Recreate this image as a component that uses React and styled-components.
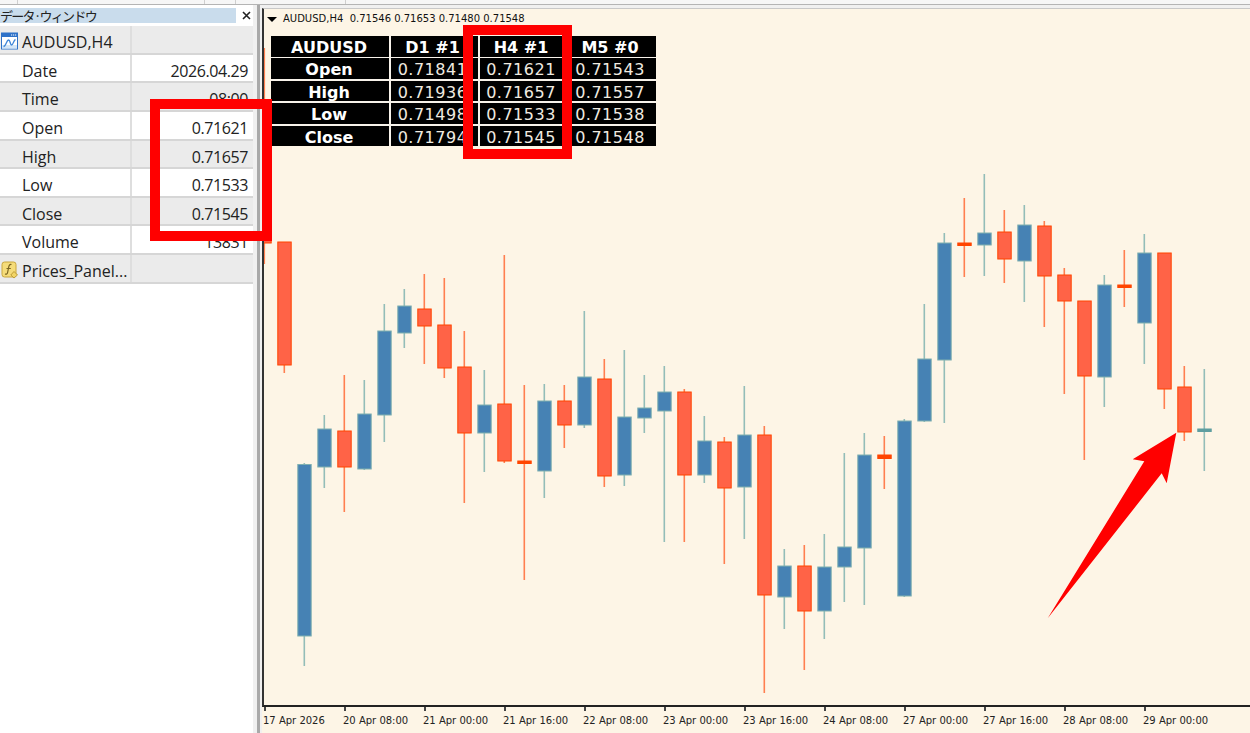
import React from "react"
import styled, { createGlobalStyle } from "styled-components"

const GlobalStyle = createGlobalStyle`
  html, body {
    margin: 0;
    padding: 0;
    height: 100%;
    overflow: hidden;
    background: #ffffff;
  }
  #root {
    height: 100%;
  }
`

const Page = styled.div`
  position: relative;
  display: flex;
  flex-direction: column;
  height: 733px;
  width: 1250px;
  overflow: hidden;
  font-family: "Open Sans", "Noto Sans", sans-serif;
  color: #222;
`
const TopStrip = styled.div`
  display: flex;
  flex: none;
  height: 4px;
  background: #f6f6f6;
  border-bottom: 1px solid #b4b4b4;
`
const StripCell = styled.div`
  flex: none;
  width: ${p => p.$w}px;
  border-right: 1px solid #cfcfcf;
`
const Main = styled.div`
  display: flex;
  flex: 1;
  min-height: 0;
`
const Panel = styled.div`
  flex: none;
  width: 253px;
  padding-top: 3px;
  background: #fff;
`
const PanelEdge = styled.div`
  flex: none;
  width: 4px;
  background: #f0f0f0;
  border-right: 3px solid #a9a9a9;
`
const TitleBar = styled.div`
  display: flex;
  align-items: center;
  height: 15px;
  margin-bottom: 3px;
  width: 258px;
`
const TitleText = styled.div`
  width: 236px;
  height: 15px;
  line-height: 15px;
  background: #c9dcec;
  color: #222;
  font-size: 13px;
  letter-spacing: -1.7px;
  white-space: nowrap;
  font-family: "Noto Sans CJK JP", sans-serif;
`
const CloseIcon = styled.svg`
  width: 9px;
  height: 9px;
  margin-left: 6px;
`
const Row = styled.div`
  display: grid;
  grid-template-columns: 132px 1fr;
  grid-template-rows: 26.65px;
  height: 28.65px;
  box-sizing: border-box;
  background: ${p => (p.$shade ? "#ebebeb" : "#ffffff")};
  border-bottom: 2px solid #d6d6d6;
  font-size: 16px;
  line-height: 32px;
`
const NameCell = styled.div`
  display: flex;
  align-items: flex-start;
  gap: 4px;
  padding-left: ${p => (p.$icon ? 1 : 22)}px;
  border-right: 2px solid #dedede;
  white-space: nowrap;
`
const ValueCell = styled.div`
  text-align: right;
  padding-right: 5px;
  letter-spacing: -0.4px;
`
const Icon = styled.svg`
  flex: none;
  width: 17px;
  height: 18px;
  margin-top: 6px;
`
const ChartWindow = styled.div`
  display: flex;
  flex: 1;
  flex-direction: column;
  min-width: 0;
  padding-left: 2px;
  padding-top: 3px;
  background: #fdf5e6;
  box-shadow: inset 2px 3px 0 #f0f0f0;
`
const Plot = styled.div`
  position: relative;
  flex: none;
  height: 699px;
  box-sizing: border-box;
  border-left: 2px solid #333;
  border-top: 1px solid #c8c8c8;
  border-bottom: 2px solid #222;
  overflow: hidden;
`
const ChartSvg = styled.svg`
  display: block;
  width: 986px;
  height: 696px;
`
const Legend = styled.div`
  position: absolute;
  left: 3px;
  top: 4px;
  display: flex;
  align-items: center;
  font-family: "DejaVu Sans", sans-serif;
  font-size: 10px;
  line-height: 12px;
  color: #111;
  white-space: pre;
`
const LegendArrow = styled.span`
  width: 0;
  height: 0;
  margin-right: 6px;
  border-left: 5px solid transparent;
  border-right: 5px solid transparent;
  border-top: 5px solid #000;
`
const PriceTable = styled.div`
  position: absolute;
  left: 7px;
  top: 27px;
  display: grid;
  grid-template-columns: 118px 87px 82px 92px;
  grid-auto-rows: 20.6px;
  gap: 1.8px 2px;
  background: #f7f2ea;
  font-family: "DejaVu Sans", sans-serif;
  font-size: 16px;
`
const Cell = styled.div`
  background: #000;
  color: ${p => (p.$bold ? "#fff" : "#f0ebe0")};
  font-weight: ${p => (p.$bold ? 700 : 400)};
  letter-spacing: ${p => (p.$bold ? 0 : 0.5)}px;
  text-align: center;
  line-height: ${p => (p.$head ? 23 : 24)}px;
  padding-right: ${p => p.$trim || 0}px;
  white-space: nowrap;
  overflow: hidden;
`
const Axis = styled.div`
  position: relative;
  display: flex;
  padding-left: 1px;
  font-family: "DejaVu Sans", sans-serif;
  font-size: 10px;
  color: #222;
`
const AxisLabel = styled.div`
  flex: none;
  width: 80px;
  box-sizing: border-box;
  height: 24px;
  padding-top: 7px;
  line-height: 13px;
  white-space: nowrap;
  background: linear-gradient(#444, #444) 1px 0 / 2px 4px no-repeat;
`
const Frame = styled.div`
  position: absolute;
  left: ${p => p.$x}px;
  top: ${p => p.$y}px;
  width: ${p => p.$w}px;
  height: ${p => p.$h}px;
  box-sizing: border-box;
  border: 10px solid #ff0000;
`

const rows = [
  ["Date", "2026.04.29"],
  ["Time", "08:00"],
  ["Open", "0.71621"],
  ["High", "0.71657"],
  ["Low", "0.71533"],
  ["Close", "0.71545"],
  ["Volume", "13831"],
]

const table = [
  ["AUDUSD", "D1 #1", "H4 #1", "M5 #0"],
  ["Open", "0.71841", "0.71621", "0.71543"],
  ["High", "0.71936", "0.71657", "0.71557"],
  ["Low", "0.71498", "0.71533", "0.71538"],
  ["Close", "0.71794", "0.71545", "0.71548"],
]

const axisLabels = [
  "17 Apr 2026", "20 Apr 08:00", "21 Apr 00:00", "21 Apr 16:00", "22 Apr 08:00", "23 Apr 00:00",
  "23 Apr 16:00", "24 Apr 08:00", "27 Apr 00:00", "27 Apr 16:00", "28 Apr 08:00", "29 Apr 00:00",
]

// x, high, body top, body bottom, low, up (blue) or down (red)
const candles = [
  [264, 48, 100, 243, 264, 0],
  [284, 242, 242, 365, 373, 0],
  [304, 463, 464.5, 636, 666, 1],
  [324, 415, 429, 467, 488, 1],
  [344, 375, 431, 467, 512, 0],
  [364, 380, 414, 469, 470, 1],
  [384, 304, 331, 415, 442, 1],
  [404, 289, 306, 333, 348, 1],
  [424, 274, 309, 326, 364, 0],
  [444, 278, 325, 368, 378, 0],
  [464, 331, 367, 433, 503, 0],
  [484, 370, 405, 433, 472, 1],
  [504, 255, 404, 461, 463, 0],
  [524, 385, 461, 463.5, 580, 0],
  [544, 384, 401, 471, 498, 1],
  [564, 385, 401, 425, 448, 0],
  [584, 311, 377, 425, 428, 1],
  [604, 359, 379, 476, 487, 0],
  [624, 350, 417, 475, 486, 1],
  [644, 375, 408, 418, 433, 1],
  [664, 366, 392, 411, 542, 1],
  [684, 389, 392, 475, 542, 0],
  [704, 416, 441, 475, 483, 1],
  [724, 437, 442, 488, 564, 0],
  [744, 386, 435, 487, 539, 1],
  [764, 426, 435, 595, 693, 0],
  [784, 549, 566, 597, 629, 1],
  [804, 545, 566, 611, 670, 0],
  [824, 534, 567, 611, 639, 1],
  [844, 453, 547, 567, 602, 1],
  [864, 433, 455, 548, 605, 1],
  [884, 436, 455, 458.5, 489, 0],
  [904, 419, 421, 596, 597, 1],
  [924, 304, 359, 421, 422, 1],
  [944, 233, 243, 360, 423, 1],
  [964, 198, 243, 245.5, 277, 0],
  [984, 174, 233, 245, 276, 1],
  [1004, 210, 232, 259, 283, 0],
  [1024, 205, 225, 261, 302, 1],
  [1044, 221, 226, 276, 327, 0],
  [1064, 268, 275, 301, 394, 0],
  [1084, 301, 301, 376, 460, 0],
  [1104, 275, 285, 377, 407, 1],
  [1124, 250, 285, 287.5, 307, 0],
  [1144, 234, 253, 323, 364, 1],
  [1164, 253, 253, 389, 409, 0],
  [1184, 366, 387, 432, 441, 0],
  [1204, 369, 429, 431.5, 471, 1],
]

const Candle = ({ c }) => {
  const [x, high, top, bottom, low, up] = c
  const wick = up ? "#93bdb8" : "#ff7f50"
  const edge = up ? "#7fb0b0" : "#ff4500"
  const doji = up ? "#5f9ea0" : "#ff4500"
  const fill = bottom - top < 4 ? doji : up ? "#4682b4" : "#ff6347"
  return (
    <g>
      <rect x={x - 0.5} y={high} width={1.6} height={low - high} fill={wick} />
      <rect x={x - 6.2} y={top} width={13.4} height={bottom - top} fill={fill} stroke={bottom - top < 4 ? doji : edge} strokeWidth={1} />
    </g>
  )
}

const WindowIcon = () => (
  <Icon viewBox="0 0 17 18">
    <rect x="0.5" y="1" width="16" height="16" fill="#fff" stroke="#2f72c8" />
    <rect x="0.5" y="1" width="16" height="4" fill="#2f72c8" />
    <rect x="10" y="2.5" width="1.2" height="1" fill="#fff" />
    <rect x="12" y="2.5" width="1.2" height="1" fill="#fff" />
    <rect x="14" y="2.5" width="1.2" height="1" fill="#fff" />
    <rect x="1" y="13" width="15" height="3.5" fill="#d4e6f7" />
    <path d="M2.5 14.5 C5 14.5 5.5 8 7.5 8 C9.5 8 9 13 10.5 13 C12.5 13 12.5 8 14.5 7.5" fill="none" stroke="#3f86d8" strokeWidth="1.3" />
  </Icon>
)

const ScriptIcon = () => (
  <Icon viewBox="0 0 17 18">
    <rect x="1" y="1" width="14" height="15" rx="2.5" fill="#f5dc7a" stroke="#c9a63c" />
    <path d="M10.5 3.5 C8.5 3 8 4.5 7.6 6.5 L6.6 11.5 C6.3 13 5.5 13.5 4 13 M5.5 7.5 H9.8" fill="none" stroke="#7a6420" strokeWidth="1.2" />
    <path d="M13 10.5 L16.5 14 L13 17 L9.8 14 Z" fill="#f2d566" stroke="#b8962f" strokeWidth="0.9" />
  </Icon>
)

const App = () => (
  <Page>
    <GlobalStyle />
    <TopStrip>
      <StripCell $w={17} />
      <StripCell $w={186} />
      <StripCell $w={30} />
      <StripCell $w={109} />
    </TopStrip>
    <Main>
      <Panel>
        <TitleBar>
          <TitleText>データ·ウィンドウ</TitleText>
          <CloseIcon viewBox="0 0 9 9">
            <path d="M1 1 L8 8 M8 1 L1 8" stroke="#222" strokeWidth="1.6" />
          </CloseIcon>
        </TitleBar>
        <Row $shade>
          <NameCell $icon>
            <WindowIcon />
            AUDUSD,H4
          </NameCell>
          <ValueCell />
        </Row>
        {rows.map((r, i) => (
          <Row key={r[0]} $shade={i % 2 === 1}>
            <NameCell>{r[0]}</NameCell>
            <ValueCell>{r[1]}</ValueCell>
          </Row>
        ))}
        <Row $shade>
          <NameCell $icon>
            <ScriptIcon />
            Prices_Panel...
          </NameCell>
          <ValueCell />
        </Row>
      </Panel>
      <PanelEdge />
      <ChartWindow>
        <Plot>
          <ChartSvg viewBox="264 9 986 696">
            {candles.map(c => (
              <Candle key={c[0]} c={c} />
            ))}
            <polygon points="1176.3,432.7 1132.7,459.3 1144.3,461.3 1047.7,618.3 1161.7,473.3 1166.7,483.3" fill="#ff0000" />
          </ChartSvg>
          <Legend>
            <LegendArrow />
            AUDUSD,H4  0.71546 0.71653 0.71480 0.71548
          </Legend>
          <PriceTable>
            {table.map((row, r) =>
              row.map((text, c) => (
                <Cell key={r + "-" + c} $head={r === 0} $bold={r === 0 || c === 0} $trim={c === 0 ? 2 : c === 1 ? 4 : 0}>
                  {text}
                </Cell>
              ))
            )}
          </PriceTable>
        </Plot>
        <Axis>
          {axisLabels.map(l => (
            <AxisLabel key={l}>{l}</AxisLabel>
          ))}
        </Axis>
      </ChartWindow>
    </Main>
    <Frame $x={150} $y={99} $w={122} $h={142} />
    <Frame $x={463} $y={25} $w={109} $h={134} />
  </Page>
)

export default App
